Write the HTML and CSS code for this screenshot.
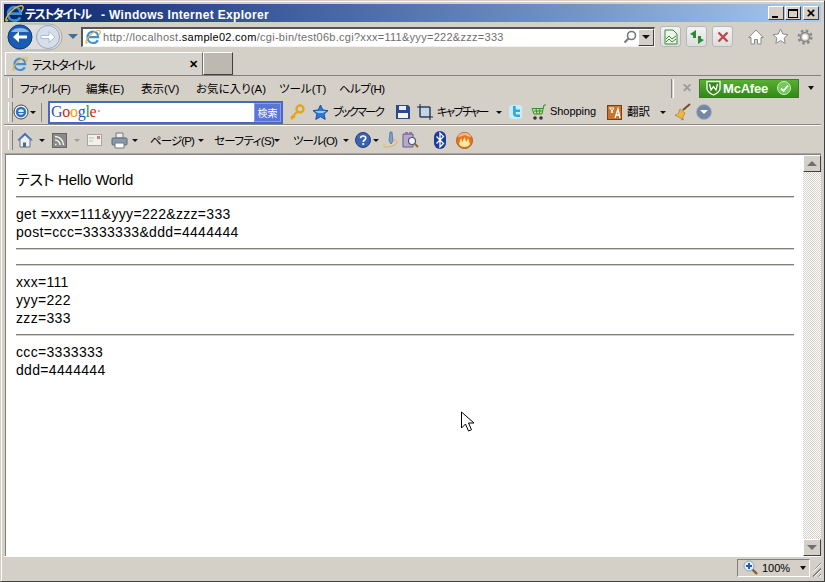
FILE: index.html
```html
<!DOCTYPE html>
<html lang="ja">
<head>
<meta charset="utf-8">
<title>テストタイトル</title>
<link rel="stylesheet" href="styles.css">
</head>
<body>
<svg class="defs" width="0" height="0" aria-hidden="true">
  <defs>
    <symbol id="ie" viewBox="0 0 20 20">
      <path d="M3.500 10.200h13c0-4.200-3-7-6.500-7S3.200 6 3.200 10.500s3 7 6.800 7c2.700 0 4.800-1.200 6-3.500" fill="none" stroke="#3d8fd8" stroke-width="2.800"/>
      <path d="M3.200 16.500C.5 19.500 0 16 3 12 7 6 14 1 18 2c2 1 1 4-1 6" fill="none" stroke="#e8b93a" stroke-width="1.500"/>
    </symbol>
    <symbol id="home" viewBox="0 0 16 16">
      <path d="M8 1 .8 8h2.200v7h10V8h2.200z" fill="#eef0f4" stroke="#6c7280"/>
      <path d="M8 1 .8 8h2.200L8 3.500 13 8h2.200z" fill="#3f78b8"/>
      <path d="M6 15v-4.500h3V15z" fill="#4a6a94"/>
    </symbol>
  </defs>
</svg>
<div class="window">
  <header class="titlebar">
    <svg class="icon title-ie" width="19" height="19"><use href="#ie"/></svg>
    <span class="title-text"><span class="title-jp">テストタイトル</span> - Windows Internet Explorer</span>
    <div class="caption-btns">
      <span class="cap-btn"><span class="cap-min"></span></span>
      <span class="cap-btn"><span class="cap-max"></span></span>
      <span class="cap-btn cap-close">×</span>
    </div>
  </header>

  <div class="navrow">
    <div class="travel">
      <svg width="56" height="28" viewBox="0 0 56 28">
        <path d="M14 1h28a13 13 0 0 1 0 26H14a13 13 0 0 1 0-26z" fill="#ddd" stroke="#aaa"/>
        <circle cx="13" cy="14" r="12" fill="#1a5cb4" stroke="#0c3a80"/>
        <path d="M4 9a10 7 0 0 1 18 0z" fill="#8ab6e8"/>
        <path d="M20 12.500h-8v-4l-6 5.500 6 5.500v-4h8z" fill="#fff"/>
        <circle cx="41" cy="14" r="11.500" fill="#d5deea" stroke="#9aa6b8"/>
        <path d="M34 12.500h8v-4l6 5.500-6 5.500v-4h-8z" fill="#fff" stroke="#9fb0c8" stroke-width=".8"/>
      </svg>
      <span class="nav-drop"></span>
    </div>
    <div class="address">
      <svg class="icon addr-ie" width="16" height="16"><use href="#ie"/></svg>
      <span class="url"><span class="url-dim">http://localhost</span>.sample02.com<span class="url-dim">/cgi-bin/test06b.cgi?xxx=111&amp;yyy=222&amp;zzz=333</span></span>
      <svg class="addr-search" width="14" height="14" viewBox="0 0 14 14"><circle cx="8.500" cy="5.500" r="4" fill="#fff" stroke="#777" stroke-width="1.600"/><path d="M5.500 8.500 1.500 12.500" stroke="#777" stroke-width="2"/></svg>
      <span class="addr-drop"><span class="tri tri-dark"></span></span>
    </div>
    <span class="tool-btn tool-first">
      <svg width="14" height="16" viewBox="0 0 14 16"><path d="M1 1h8l4 4v10H1z" fill="#eef6ea" stroke="#3f8a3a"/><path d="M2 10l3-3 3 3 4-3M2 13l3-3 3 3 4-3" fill="none" stroke="#3f8a3a"/></svg>
    </span>
    <span class="tool-btn">
      <svg width="16" height="16" viewBox="0 0 16 16"><path d="M7 1 1 5l3 1.500V9h3zM9 15l6-4-3-1.500V7H9z" fill="#2f8a34"/></svg>
    </span>
    <span class="tool-btn">
      <svg width="12" height="12" viewBox="0 0 12 12"><path d="M1.500 1.500l9 9M10.500 1.500l-9 9" stroke="#c0464a" stroke-width="2.400"/></svg>
    </span>
    <div class="right-icons">
      <svg width="16" height="16" viewBox="0 0 16 16"><path d="M8 1 .8 8.500H3V15h3.500v-4.500h3V15H13V8.500h2.200z" fill="#fff" stroke="#8a8a88"/></svg>
      <svg width="17" height="17" viewBox="0 0 17 17"><path d="M8.500 1l2.300 5 5.200.6-3.900 3.500 1.100 5.300-4.700-2.700-4.700 2.700 1.100-5.300L1 6.600l5.200-.6z" fill="#fff" stroke="#8a8a88"/></svg>
      <svg width="16" height="16" viewBox="0 0 16 16"><circle cx="8" cy="8" r="4.500" fill="none" stroke="#8a8a88" stroke-width="1.500"/><circle cx="8" cy="8" r="6.300" fill="none" stroke="#8a8a88" stroke-width="2.600" stroke-dasharray="2.500 2.450"/><circle cx="8" cy="8" r="2.500" fill="#fff"/></svg>
    </div>
  </div>

  <div class="tabrow">
    <div class="tab">
      <svg class="icon tab-ie" width="16" height="16"><use href="#ie"/></svg>
      <span class="tab-title">テストタイトル</span>
      <span class="tab-close">✕</span>
    </div>
    <div class="new-tab"></div>
  </div>

  <div class="bar menubar">
    <span class="handle w12"></span>
    <span class="jp w66 tight-s">ファイル(F)</span>
    <span class="jp w55">編集(E)</span>
    <span class="jp w55">表示(V)</span>
    <span class="jp w83">お気に入り(A)</span>
    <span class="jp w60">ツール(T)</span>
    <span class="jp w46 tight-s">ヘルプ(H)</span>
    <div class="mcafee-group">
      <span class="vsep"></span>
      <span class="stop-x">✕</span>
      <div class="mcafee">
        <svg width="15" height="16" viewBox="0 0 15 16"><path d="M1 1.500h13v7c0 3-3 5-6.500 6.500C4 13.500 1 11.500 1 8.500z" fill="#2f8a18" stroke="#fff" stroke-width="1.300"/><path d="M3.500 4l1.500 6 2.500-3.500L10 10l1.500-6" fill="none" stroke="#fff" stroke-width="1.300"/></svg>
        <span class="mcafee-name">McAfee</span>
        <span class="mcafee-check"><svg width="9" height="9" viewBox="0 0 9 9"><path d="M1 4.500 3.500 7 8 1.500" fill="none" stroke="#fff" stroke-width="1.800"/></svg></span>
      </div>
      <span class="tri tri-dark mcafee-drop"></span>
    </div>
  </div>

  <div class="bar linkbar">
    <span class="handle w5"></span>
    <div class="slot w28">
      <svg width="16" height="16" viewBox="0 0 16 16"><circle cx="8" cy="8" r="7" fill="#f4f4f4" stroke="#444"/><circle cx="8" cy="8" r="4" fill="none" stroke="#2a72c8" stroke-width="2.400"/><path d="M3 8.500h10" stroke="#2a72c8" stroke-width="1.200"/></svg>
      <span class="tri tri-dark tri-small"></span>
    </div>
    <span class="slot w7"><span class="thin-sep"></span></span>
    <div class="slot w241">
      <div class="gbox">
        <span class="google"><span class="g-b">G</span><span class="g-r">o</span><span class="g-y">o</span><span class="g-b">g</span><span class="g-g">l</span><span class="g-r">e</span><span class="g-dim">·</span></span>
        <span class="gbtn">検索</span>
      </div>
    </div>
    <span class="slot w23">
      <svg width="16" height="16" viewBox="0 0 16 16"><circle cx="11" cy="5" r="3.500" fill="none" stroke="#e0a818" stroke-width="2.400"/><path d="M8.500 7.500 2 14M2 14l2 1M4 12l2 1.500" stroke="#e0a818" stroke-width="2.200" fill="none"/></svg>
    </span>
    <span class="slot w21">
      <svg width="17" height="17" viewBox="0 0 17 17"><path d="M8.500 1l2.300 5 5.200.6-3.900 3.500 1.100 5.300-4.700-2.700-4.700 2.700 1.100-5.300L1 6.600l5.200-.6z" fill="#2a78e0" stroke="#1a4fa0"/><path d="M3 7h11l-3 2H6z" fill="#9cc8f4"/></svg>
    </span>
    <span class="jp w62 tight-l">ブックマーク</span>
    <span class="slot w22">
      <svg width="16" height="16" viewBox="0 0 16 16"><path d="M1 1h12l2 2v12H1z" fill="#2a4a88"/><path d="M4 2h7v4H4z" fill="#e8ecf4"/><path d="M3 9h10v5H3z" fill="#f4f4f4"/></svg>
    </span>
    <span class="slot w20">
      <svg width="16" height="16" viewBox="0 0 16 16"><path d="M3 3h10v10H3z" fill="#c4d4e8" stroke="#5a6a88"/><path d="M3 0v13h13M0 3h13v13" fill="none" stroke="#1a2a44"/></svg>
    </span>
    <span class="jp w58 tight-l">キャプチャー</span>
    <span class="slot w13"><span class="tri tri-dark tri-small"></span></span>
    <span class="slot w22">
      <svg width="15" height="16" viewBox="0 0 15 16"><rect x="1" y="1" width="13" height="14" rx="3" fill="#c8ecfa"/><path d="M5 2v8c0 2 2 3 4 3h3v-2.500H9c-1 0-1.300-.5-1.300-1V8H12V5.500H7.700V2z" fill="#2fa8e0"/></svg>
    </span>
    <span class="slot w20">
      <svg width="17" height="17" viewBox="0 0 17 17"><path d="M16 1h-2l-2 9H4L2 4.500h11" fill="#bfe49a" stroke="#3c8a2c"/><path d="M4 7h8M6 4.500 7 10M10 4.500 9.500 10" stroke="#3c8a2c" fill="none"/><circle cx="5" cy="14" r="1.800" fill="#333"/><circle cx="11" cy="14" r="1.800" fill="#333"/></svg>
    </span>
    <span class="jp w57 shop">Shopping</span>
    <span class="slot w20">
      <svg width="15" height="15" viewBox="0 0 15 15"><rect x=".5" y=".5" width="14" height="14" fill="#c8742c" stroke="#7a3f14"/><path d="M2 3h5L4 8M3 3l3 5" stroke="#fff" fill="none"/><path d="M8 13l3-9 2 9M9 10h3.500" stroke="#fff" fill="none" stroke-width="1.300"/></svg>
    </span>
    <span class="jp w32">翻訳</span>
    <span class="slot w15"><span class="tri tri-dark tri-small"></span></span>
    <span class="slot w22">
      <svg width="18" height="18" viewBox="0 0 18 18"><path d="M16 1 9 7" stroke="#7a4a1c" stroke-width="2"/><path d="M6 6l5 4-3 6-7-4c3 0 4-3 5-6z" fill="#eab84a" stroke="#b07a1c" stroke-width=".7"/><path d="M7 17l3-1" stroke="#7a8aa0"/></svg>
    </span>
    <span class="round-more"><span class="tri tri-white"></span></span>
  </div>

  <div class="bar cmdbar">
    <span class="handle w9"></span>
    <span class="slot w21"><svg width="16" height="18"><use href="#home"/></svg></span>
    <span class="slot w14"><span class="tri tri-dark tri-small"></span></span>
    <span class="slot w21">
      <svg width="15" height="15" viewBox="0 0 15 15"><rect x=".5" y=".5" width="14" height="14" fill="#8a8a88" stroke="#666"/><path d="M3 11.500h1.500M3 7a5 5 0 0 1 5 5M3 3.500A8.500 8.500 0 0 1 11.500 12" fill="none" stroke="#f0f0ee" stroke-width="1.500"/></svg>
    </span>
    <span class="slot w14"><span class="tri tri-gray tri-small"></span></span>
    <span class="slot w24">
      <svg width="15" height="12" viewBox="0 0 15 12"><rect x=".5" y=".5" width="14" height="11" fill="#f2f0ec" stroke="#a8a6a0"/><path d="M2 4h5M2 7h4" stroke="#c0bdb6"/><rect x="10" y="2" width="3" height="3" fill="#d08080"/></svg>
    </span>
    <span class="slot w20">
      <svg width="17" height="17" viewBox="0 0 17 17"><path d="M5 1h7v5H5z" fill="#eee" stroke="#777"/><rect x="1" y="6" width="15" height="7" rx="1" fill="#8898ac" stroke="#5a6a80"/><path d="M4 11h9v5H4z" fill="#fff" stroke="#777"/></svg>
    </span>
    <span class="slot w19"><span class="tri tri-dark tri-small"></span></span>
    <span class="jp w47 tight-m">ページ(P)</span>
    <span class="slot w17"><span class="tri tri-dark tri-small"></span></span>
    <span class="jp w59 tight-s">セーフティ(S)</span>
    <span class="slot w20"><span class="tri tri-dark tri-small"></span></span>
    <span class="jp w49 tight-m">ツール(O)</span>
    <span class="slot w13"><span class="tri tri-dark tri-small"></span></span>
    <span class="slot w17">
      <svg width="16" height="16" viewBox="0 0 16 16"><circle cx="8" cy="8" r="7.500" fill="#3a62b0" stroke="#24407c"/><path d="M5.500 6.200C5.700 4.700 6.800 4 8 4c1.500 0 2.700.9 2.700 2.300C10.700 8 8.200 8 8.200 10" fill="none" stroke="#fff" stroke-width="1.700"/><circle cx="8.200" cy="12" r="1.100" fill="#fff"/></svg>
    </span>
    <span class="slot w11"><span class="tri tri-dark tri-small"></span></span>
    <span class="slot w19">
      <svg width="16" height="18" viewBox="0 0 16 18"><path d="M7 1h2l1 9-2 3-2-3z" fill="#7aa0d0" stroke="#4a6a9c" stroke-width=".7"/><path d="M10 9c4 0 5 2 3 4s-7 3-10 3-3-2-1-3" fill="none" stroke="#e8b040"/></svg>
    </span>
    <span class="slot w31">
      <svg width="18" height="18" viewBox="0 0 18 18"><path d="M1 3h10v13H1z" fill="#b8a8cc" stroke="#6a5a8a"/><path d="M3 1h3v3H3zM7 1h3v3H7z" fill="#8a7aa4"/><circle cx="10" cy="10" r="3.500" fill="#eef4fa" stroke="#4a5a70" stroke-width="1.200"/><path d="M12.500 12.500 16 16" stroke="#8a6a2a" stroke-width="2"/></svg>
    </span>
    <span class="slot w23">
      <svg width="14" height="18" viewBox="0 0 14 18"><rect x="1" y="0" width="12" height="18" rx="6" fill="#1a3c9c"/><path d="M3.500 5.500l7 7L7 16V2l3.500 3.500-7 7" fill="none" stroke="#fff" stroke-width="1.300"/></svg>
    </span>
    <span class="slot">
      <svg width="17" height="17" viewBox="0 0 17 17"><circle cx="8.500" cy="8.500" r="8" fill="#e8741c" stroke="#b85a18"/><path d="M1.500 5C3 2 6 .8 8.500.8S14 2 15.500 5L12 4.500 8.500 3 5 4.500z" fill="#f0b890"/><path d="M3 12l2-6 1.500 4L8.500 5l2 5L12 6l2 6c-1 2-3 3-5.500 3S4 14 3 12z" fill="#fde8a0"/></svg>
    </span>
  </div>

  <div class="main">
    <article class="doc">
      <h1 class="heading">テスト Hello World</h1>
      <hr class="rule rule-first">
      <p class="line">get =xxx=111&amp;yyy=222&amp;zzz=333</p>
      <p class="line">post=ccc=3333333&amp;ddd=4444444</p>
      <hr class="rule">
      <hr class="rule">
      <p class="line">xxx=111</p>
      <p class="line">yyy=222</p>
      <p class="line">zzz=333</p>
      <hr class="rule">
      <p class="line">ccc=3333333</p>
      <p class="line">ddd=4444444</p>
    </article>
    <div class="scrollbar">
      <span class="sb-btn"><span class="sb-up"></span></span>
      <span class="sb-track"></span>
      <span class="sb-btn"><span class="sb-down"></span></span>
    </div>
    <svg class="cursor" width="14" height="22" viewBox="0 0 14 22"><path d="M1.500 1v16l4-4 3 7 3-1.300-3-6.700h5.500z" fill="#fff" stroke="#000"/></svg>
  </div>

  <footer class="status">
    <div class="zoom">
      <svg width="15" height="15" viewBox="0 0 15 15"><path d="M9 9l5 5" stroke="#8a5a2a" stroke-width="2.400"/><circle cx="6" cy="6" r="5" fill="#e8f0fa" stroke="#8aa0c0"/><path d="M6 3v6M3 6h6" stroke="#1a5cc0" stroke-width="2"/></svg>
      <span class="zoom-val">100%</span>
      <span class="tri tri-dark zoom-drop"></span>
    </div>
    <span class="grip"></span>
  </footer>
</div>
</body>
</html>
```
FILE: styles.css
```css
* { box-sizing: border-box; }
html, body { margin: 0; padding: 0; background: #d4d0c8; }
body {
  font-family: "Liberation Sans", "Noto Sans CJK JP", sans-serif;
  font-feature-settings: "palt";
  color: #000;
}
.defs { position: absolute; }
.window {
  width: 825px;
  height: 582px;
  overflow: hidden;
  position: relative;
  display: flex;
  flex-direction: column;
  padding: 3px 3px 3px;
  background: #d4d0c8;
  border: 1px solid;
  border-color: #d4d0c8 #404040 #404040 #d4d0c8;
  box-shadow: inset 1px 1px 0 #fff;
}
svg { display: block; flex: none; }

/* title bar */
.titlebar {
  height: 18px;
  flex: none;
  display: flex;
  align-items: center;
  background: linear-gradient(90deg, #0a246a 0%, #3f5f9f 35%, #7295c6 70%, #a6caf0 100%);
}
.title-ie { margin-left: 1px; }
.title-text {
  color: #fff;
  font-size: 12px;
  font-weight: 700;
  letter-spacing: .32px;
  white-space: nowrap;
  margin-left: 1px;
}
.title-jp { letter-spacing: -1.5px; margin-right: 7px; }
.caption-btns { margin-left: auto; margin-right: 2px; display: flex; }
.cap-btn {
  width: 16px;
  height: 14px;
  margin-left: 1px;
  background: #d4d0c8;
  border: 1px solid;
  border-color: #fff #404040 #404040 #fff;
  display: flex;
  align-items: center;
  justify-content: center;
  position: relative;
}
.cap-min { width: 6px; height: 2px; background: #000; align-self: flex-end; margin-bottom: 1px; margin-right: 3px; }
.cap-max { width: 10px; height: 9px; border: 1px solid #000; border-top-width: 2px; }
.cap-close { font-size: 15px; line-height: 12px; font-weight: 700; margin-left: 2px; }

/* nav row */
.navrow { height: 29px; flex: none; display: flex; align-items: center; padding-left: 3px; }
.travel { display: flex; align-items: center; width: 74px; flex: none; }
.nav-drop {
  margin-left: 5px;
  width: 0; height: 0;
  border-left: 5px solid transparent;
  border-right: 5px solid transparent;
  border-top: 5px solid #3a6ea5;
}
.address {
  width: 574px;
  height: 20px;
  flex: none;
  background: #fff;
  border: 1px solid;
  border-width: 2px 1px 1px 2px;
  border-color: #555 #f4f2ee #f4f2ee #555;
  display: flex;
  align-items: center;
}
.addr-ie { margin-left: 2px; }
.url {
  margin-left: 2px;
  font-size: 11px;
  letter-spacing: .28px;
  color: #000;
  white-space: nowrap;
}
.url-dim { color: #6e6e6e; }
.addr-search { margin-left: auto; margin-right: 1px; }
.addr-drop {
  width: 16px;
  height: 17px;
  background: #d4d0c8;
  border: 1px solid;
  border-color: #fff #404040 #404040 #fff;
  display: flex;
  align-items: center;
  justify-content: center;
}
.tool-btn {
  width: 21px;
  height: 21px;
  flex: none;
  margin-left: 5px;
  border: 1px solid #b4b8bc;
  border-radius: 3px;
  background: linear-gradient(#f2f4f4, #dcdedc);
  display: flex;
  align-items: center;
  justify-content: center;
}
.tool-first { margin-left: 5px; }
.right-icons { display: flex; align-items: center; gap: 8px; margin-left: 15px; }

/* tabs */
.tabrow { height: 25px; flex: none; display: flex; align-items: stretch; padding: 1px 0 0 1px; border-bottom: 1px solid #808080; }
.tab {
  width: 198px;
  display: flex;
  align-items: center;
  background: #d6d3cc;
  border-top: 1px solid #fff;
  border-left: 1px solid #fff;
  border-right: 1px solid #706c64;
}
.tab-ie { margin-left: 6px; }
.tab-title { margin-left: 4px; font-size: 12px; letter-spacing: -1.5px; white-space: nowrap; }
.tab-close { margin-left: auto; margin-right: 4px; font-size: 11px; font-weight: 700; }
.new-tab {
  width: 30px;
  background: #bdb9b0;
  border: 1px solid;
  border-color: #fff #404040 #404040 #fff;
}

/* bars */
.bar { flex: none; display: flex; align-items: center; padding-left: 4px; }
.menubar { height: 24px; }
.linkbar { height: 25px; border-bottom: 1px solid #8a8880; box-shadow: 0 1px 0 #fff; }
.cmdbar { height: 29px; padding-top: 2px; border-bottom: 1px solid #a8a59e; }
.handle {
  height: 20px;
  flex: none;
  position: relative;
}
.handle::before {
  content: "";
  display: block;
  width: 3px;
  height: 20px;
  border-left: 1px solid #fff;
  border-right: 1px solid #808080;
}
.slot { flex: none; display: flex; align-items: center; }
.jp { flex: none; font-size: 11.5px; white-space: nowrap; display: block; }
.linkbar .jp { padding-bottom: 2px; }
.tight-s { letter-spacing: -.6px; }
.tight-m { letter-spacing: -.9px; }
.tight-l { letter-spacing: -1.9px; }
.shop { font-size: 11px; letter-spacing: -.05px; }
.thin-sep { width: 1px; height: 19px; background: #8a8880; margin-left: 0; }
.w5 { width: 5px; } .w7 { width: 7px; } .w9 { width: 9px; } .w11 { width: 11px; }
.w12 { width: 12px; } .w13 { width: 13px; } .w14 { width: 14px; } .w15 { width: 15px; }
.w17 { width: 17px; } .w19 { width: 19px; } .w20 { width: 20px; } .w21 { width: 21px; }
.w22 { width: 22px; } .w23 { width: 23px; } .w24 { width: 24px; } .w28 { width: 28px; }
.w31 { width: 31px; } .w32 { width: 32px; } .w46 { width: 46px; } .w47 { width: 47px; }
.w49 { width: 49px; } .w55 { width: 55px; } .w57 { width: 57px; } .w58 { width: 58px; }
.w59 { width: 59px; } .w60 { width: 60px; } .w62 { width: 62px; } .w66 { width: 66px; }
.w83 { width: 83px; } .w241 { width: 241px; }

.tri { display: block; width: 0; height: 0; border-left: 4px solid transparent; border-right: 4px solid transparent; border-top: 4px solid #000; flex: none; }
.tri-small { border-left-width: 3px; border-right-width: 3px; border-top-width: 3px; margin-left: 1px; }
.tri-dark { border-top-color: #111; }
.tri-gray { border-top-color: #9a9a98; }
.tri-white { border-top-color: #fff; }

/* mcafee */
.mcafee-group { margin-left: auto; display: flex; align-items: center; margin-right: 7px; }
.vsep { width: 3px; height: 19px; border-left: 1px solid #808080; border-right: 1px solid #fff; }
.stop-x { width: 25px; text-align: center; margin-left: 0; color: #9a9a98; font-size: 12px; font-weight: 700; }
.mcafee {
  width: 100px;
  height: 19px;
  display: flex;
  align-items: center;
  padding: 0 4px 0 6px;
  background: linear-gradient(#58b030, #2f8a18);
  border: 1px solid #3c7a28;
}
.mcafee-name { margin-left: 2px; color: #fff; font-size: 13px; font-weight: 700; letter-spacing: -.2px; }
.mcafee-check {
  margin-left: auto;
  margin-right: 3px;
  width: 14px; height: 14px;
  border-radius: 50%;
  background: #74c85a;
  border: 1px solid #cfeec0;
  display: flex;
  align-items: center;
  justify-content: center;
}
.mcafee-drop { margin-left: 9px; border-left-width: 3px; border-right-width: 3px; }

/* google box */
.gbox {
  width: 235px;
  height: 23px;
  background: #fff;
  border: 2px solid #4a66cc;
  display: flex;
  align-items: stretch;
  justify-content: space-between;
}
.google { font-family: "Liberation Serif", serif; font-size: 16px; line-height: 18px; padding-left: 1px; letter-spacing: -.3px; }
.g-b { color: #2a54c8; } .g-r { color: #c8281c; } .g-y { color: #d8a418; } .g-g { color: #2a9038; } .g-dim { color: #999; }
.gbtn {
  width: 27px;
  background: #5a74d8;
  color: #fff;
  font-size: 10px;
  text-align: center;
  line-height: 19px;
  border: 1px solid #8a9ce4;
}
.round-more {
  width: 16px; height: 16px;
  border-radius: 50%;
  background: #7488a4;
  border: 1px solid #a6b2c4;
  display: flex;
  align-items: center;
  justify-content: center;
}

/* main */
.main { flex: 1; min-height: 0; display: flex; margin-left: 1px; position: relative; border-top: 1px solid #808080; border-left: 1px solid #808080; }
.doc {
  flex: 1;
  min-width: 0;
  background: #fff;
  padding: 16px 9px 0 10px;
  display: flex;
  flex-direction: column;
  font-size: 14px;
  line-height: 18px;
}
.heading { margin: 0 0 7px; font-size: 15px; font-weight: 400; line-height: 18px; letter-spacing: -.2px; }
.line { margin: 0; letter-spacing: .32px; }
.rule {
  flex: none;
  width: 100%;
  height: 2px;
  margin: 7px 0;
  border: 0;
  border-top: 1px solid #808080;
  border-bottom: 1px solid #d4d0c8;
}
.rule-first { margin-top: 0; }
.scrollbar { width: 18px; flex: none; display: flex; flex-direction: column; }
.sb-btn {
  height: 17px;
  flex: none;
  background: #d4d0c8;
  border: 1px solid;
  border-color: #fff #404040 #404040 #fff;
  display: flex;
  align-items: center;
  justify-content: center;
}
.sb-up { width: 0; height: 0; border-left: 5px solid transparent; border-right: 5px solid transparent; border-bottom: 5px solid #707070; }
.sb-down { width: 0; height: 0; border-left: 5px solid transparent; border-right: 5px solid transparent; border-top: 5px solid #707070; }
.sb-track {
  flex: 1;
  background: repeating-conic-gradient(#d4d0c8 0 25%, #fff 0 50%) 0 0 / 2px 2px;
}
.cursor { position: absolute; left: 454px; top: 256px; }

/* status */
.status { height: 22px; flex: none; display: flex; align-items: center; justify-content: flex-end; border-top: 1px solid #fff; }
.zoom {
  width: 73px;
  height: 18px;
  display: flex;
  align-items: center;
  padding-left: 5px;
  border: 1px solid;
  border-color: #808080 #fff #fff #808080;
}
.zoom-val { margin-left: 4px; font-size: 11px; }
.zoom-drop { margin-left: 10px; border-left-width: 3px; border-right-width: 3px; }
.grip {
  width: 11px;
  height: 18px;
  background: repeating-linear-gradient(135deg, #d4d0c8 0 2px, #808080 2px 3px, #fff 3px 4px);
  clip-path: polygon(100% 10%, 100% 100%, 0 100%);
}
```
